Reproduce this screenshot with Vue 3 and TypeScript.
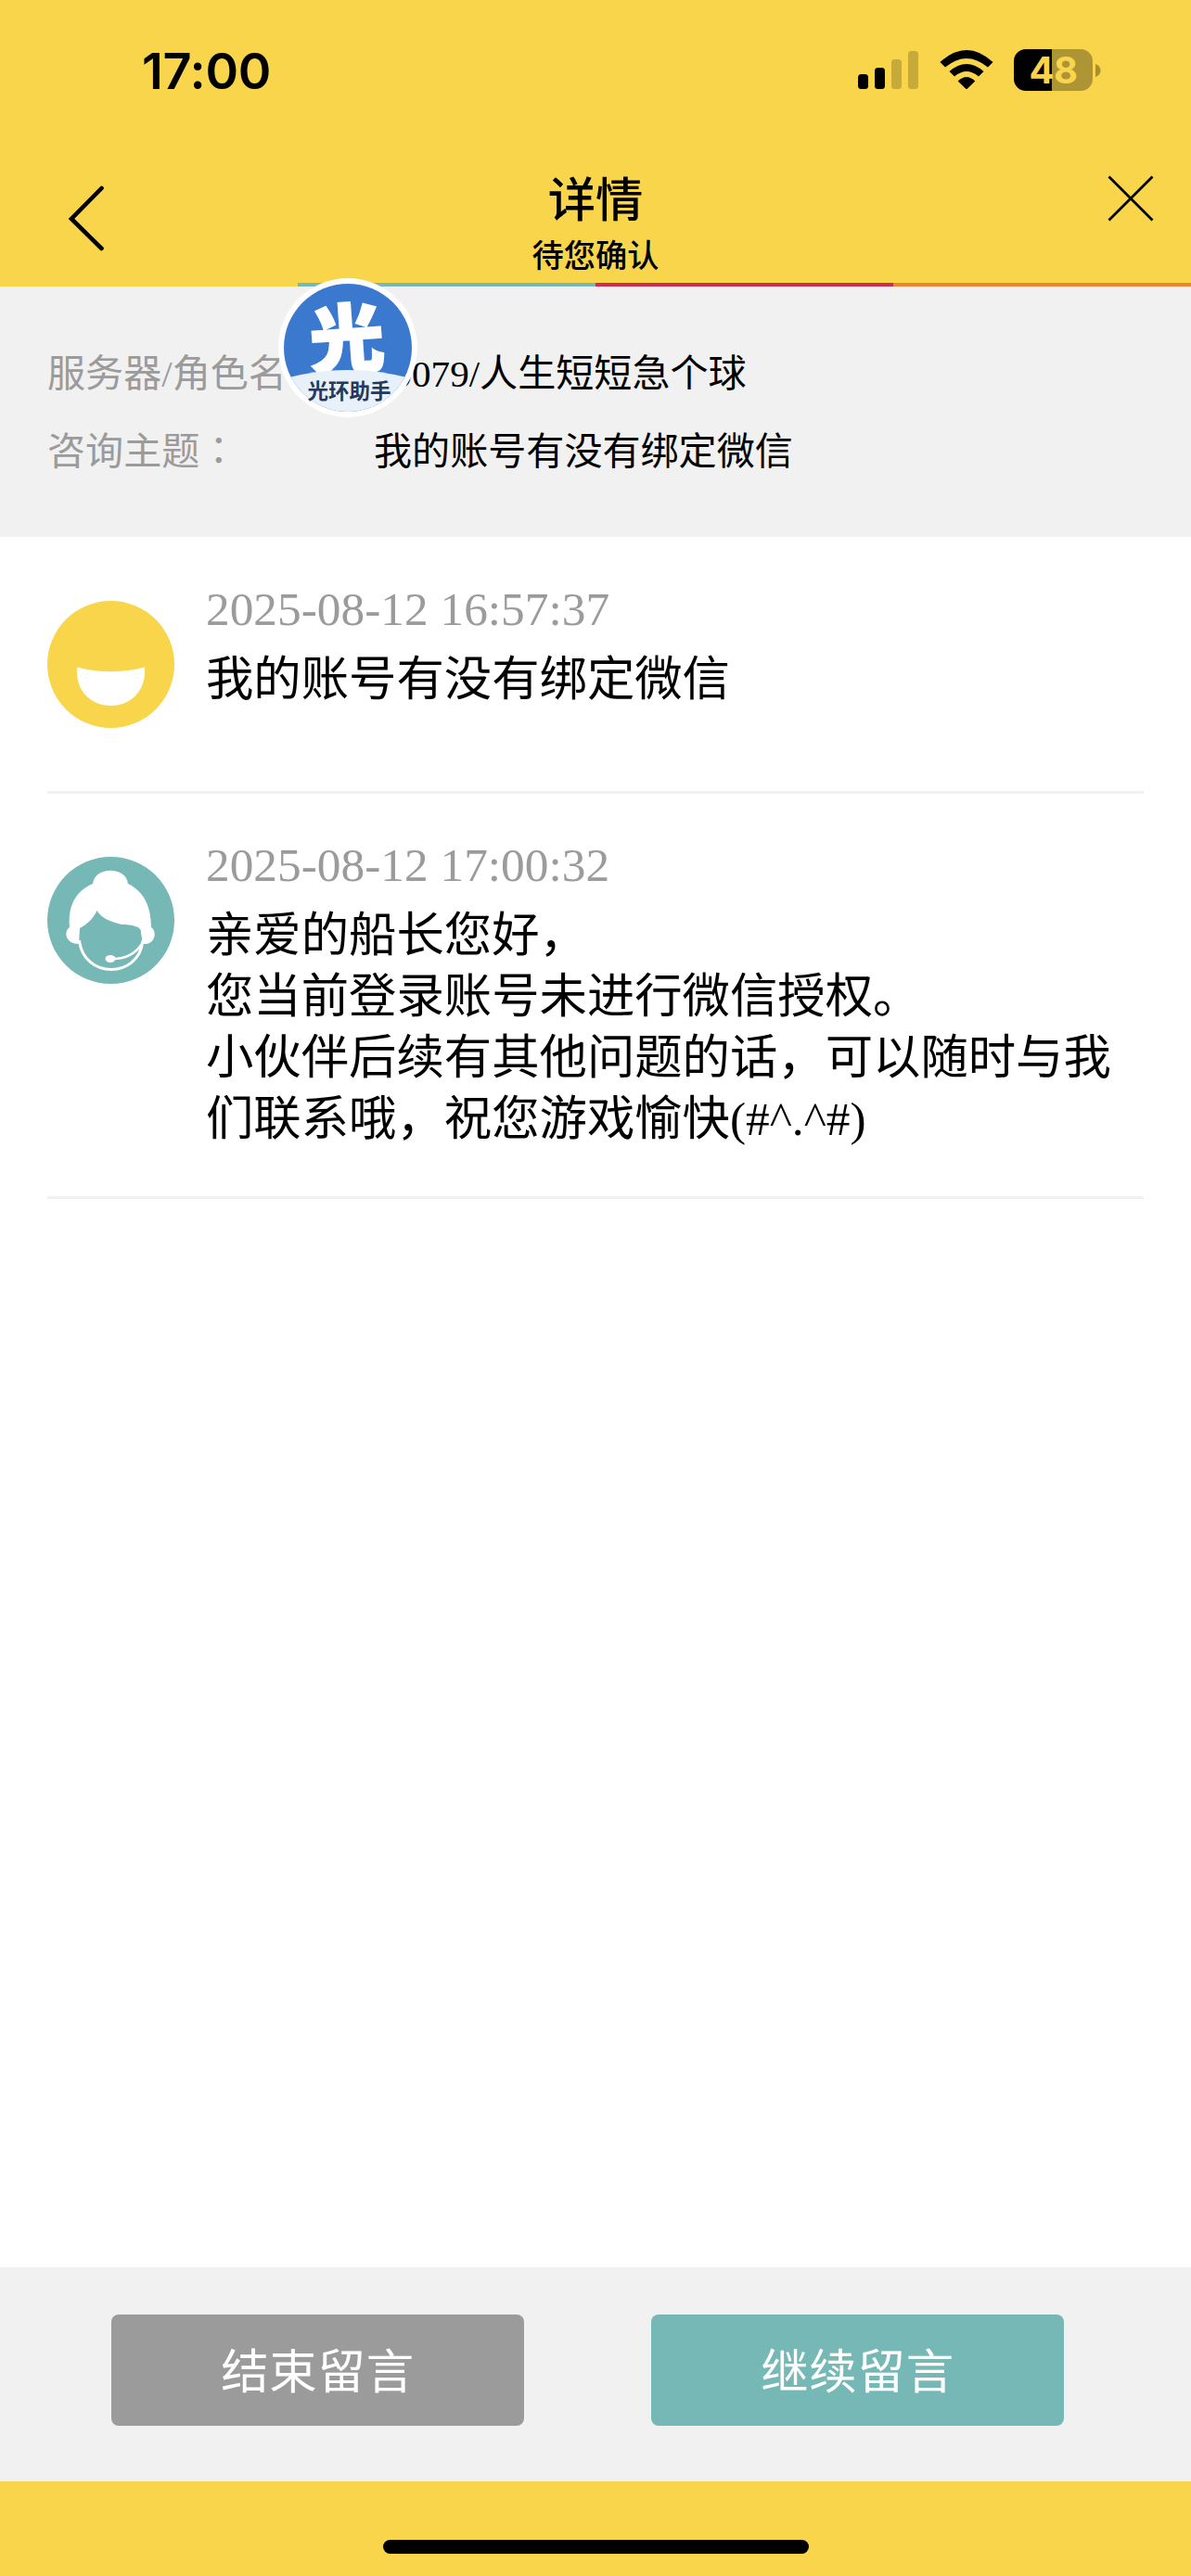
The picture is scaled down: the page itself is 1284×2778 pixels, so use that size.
<script setup lang="ts">
interface Message {
  from: 'user' | 'agent'
  time: string
  lines: string[]
}

const messages: Message[] = [
  { from: 'user', time: '2025-08-12 16:57:37', lines: ['我的账号有没有绑定微信'] },
  {
    from: 'agent',
    time: '2025-08-12 17:00:32',
    lines: [
      '亲爱的船长您好，',
      '您当前登录账号未进行微信授权。',
      '小伙伴后续有其他问题的话，可以随时与我们联系哦，祝您游戏愉快(#^.^#)',
    ],
  },
]
</script>

<template>
  <div class="screen">
    <header class="top">
      <div class="status">
        <span class="clock">17:00</span>
        <div class="indicators">
          <svg class="signal" width="65" height="41" viewBox="0 0 65 41">
            <rect x="0" y="25" width="11" height="16" rx="3.5" />
            <rect x="18" y="18" width="11" height="23" rx="3.5" />
            <rect x="36" y="9" width="11" height="32" rx="3.5" opacity=".2" />
            <rect x="54" y="0" width="11" height="41" rx="3.5" opacity=".2" />
          </svg>
          <svg class="wifi" width="58" height="42" viewBox="0 0 58 42">
            <path d="M0.5 13 Q29 -13 57.500 13 L52 18.600 Q29 -0.600 6 18.600Z" />
            <path d="M10.500 23 Q29 7 47.500 23 L42 28.600 Q29 17.500 16 28.600Z" />
            <path d="M19.700 33.600 Q29 24.500 38.300 33.600 L29 42.500Z" />
          </svg>
          <div class="battery">
            <span>48</span>
          </div>
          <svg class="nub" width="6" height="14" viewBox="0 0 6 14"><path d="M0 0Q5.500 2 5.500 7T0 14Z" opacity=".32" /></svg>
        </div>
      </div>
      <nav class="nav">
        <svg class="back" width="42" height="72" viewBox="0 0 42 72">
          <path d="M37.500 4 L5 37 L37.500 69" fill="none" stroke="#000" stroke-width="4.600" stroke-linecap="round" />
        </svg>
        <div class="titles">
          <h1>详情</h1>
          <p>待您确认</p>
        </div>
        <svg class="close" width="50" height="50" viewBox="0 0 50 50">
          <path d="M1.500 1.500 L48.500 48.500 M48.500 1.500 L1.500 48.500" stroke="#000" stroke-width="2.800" />
        </svg>
      </nav>
      <div class="stripe"><i></i><i class="teal"></i><i class="red"></i><i class="orange"></i></div>
    </header>

    <section class="info">
      <div class="row"><span class="label">服务器/角色名<b>：</b></span><span>10079/人生短短急个球</span></div>
      <div class="row"><span class="label">咨询主题<b>：</b></span><span>我的账号有没有绑定微信</span></div>
    </section>

    <main class="list">
      <article v-for="m in messages" :key="m.time" class="msg">
        <svg v-if="m.from === 'user'" class="avatar" viewBox="0 0 137 137">
          <circle cx="68.500" cy="68.500" r="68.500" fill="#f8d54b" />
          <path d="M32 71.500 Q68.500 81 105 71.500 C107 96 91 113 68.500 113 C46 113 30 96 32 71.500Z" fill="#fff" />
        </svg>
        <svg v-else class="avatar" viewBox="0 0 137 137">
          <circle cx="68.500" cy="68.500" r="68.500" fill="#75b8b5" />
          <path d="M49 29 C51 10 85 10 87 29 C104 37 112 54 112 76 C118 80 117 92 107 94 L103 94 L101 82 C102 75 91 73 80 73 C68 70 58 66 53.500 58 C50 66 43 73 35 77 L34 94 C20 94 17 81 24 76 C22 52 31 37 49 29Z" fill="#fff" />
          <path d="M34.500 90 C39 132 99 132 103 90" fill="none" stroke="#fff" stroke-width="3" />
          <path d="M102 94 Q91 110 71 110" fill="none" stroke="#fff" stroke-width="2.600" />
          <ellipse cx="68" cy="110" rx="5.500" ry="4" fill="#fff" />
        </svg>
        <div class="body">
          <time>{{ m.time }}</time>
          <p v-for="line in m.lines" :key="line">{{ line }}</p>
        </div>
      </article>
    </main>

    <footer class="actions">
      <button class="end">结束留言</button>
      <button class="go">继续留言</button>
    </footer>
    <div class="home"><i></i></div>

    <svg class="float" width="150" height="150" viewBox="0 0 150 150">
      <defs>
        <clipPath id="disc"><circle cx="75" cy="75" r="69" /></clipPath>
      </defs>
      <circle cx="75" cy="75" r="75" fill="#fff" />
      <g clip-path="url(#disc)">
        <rect width="150" height="150" fill="#3b79cf" />
        <text class="mark" x="74" y="95" text-anchor="middle" transform="rotate(-4 74 66)">光</text>
        <path d="M0 110 Q75 88 150 110 V150 H0Z" fill="#e8f0f9" />
      </g>
      <text class="brand" x="76.500" y="130" text-anchor="middle" textLength="90">光环助手</text>
    </svg>
  </div>
</template>

<style>
body {
  margin: 0;
  background: #fff;
}
</style>

<style scoped>
.screen {
  position: relative;
  display: flex;
  flex-direction: column;
  width: 1284px;
  height: 2778px;
  background: #fff;
  color: #000;
  font-family: "Liberation Serif", "Noto Sans CJK SC", serif;
}
.top {
  display: flex;
  flex-direction: column;
  height: 309px;
  background: #f8d54b;
}
.status {
  display: flex;
  justify-content: space-between;
  height: 150px;
  padding: 0 97px 0 153px;
}
.clock {
  margin-top: 45px;
  font: 600 54px/64px Inter, sans-serif;
  letter-spacing: -0.3px;
}
.indicators {
  display: flex;
  align-items: flex-start;
}
.signal {
  margin: 55px 23px 0 0;
}
.wifi {
  margin: 54px 22px 0 0;
}
.battery {
  width: 85px;
  height: 45px;
  margin-top: 53px;
  border-radius: 13px;
  background: linear-gradient(90deg, #000 41px, #ad9535 41px);
  color: #f8d54b;
  font: 700 40px/46px Inter, sans-serif;
  letter-spacing: -0.5px;
  text-align: center;
}
.nub {
  margin: 69px 0 0 3px;
}
.nav {
  display: flex;
  align-items: flex-start;
  height: 155px;
  padding: 0 40px 0 72px;
}
.back {
  flex: none;
  margin-top: 49px;
}
.titles {
  width: 300px;
  margin: 0 auto 0 378px;
  text-align: center;
  font-family: "Noto Sans CJK SC", sans-serif;
}
.titles h1 {
  margin: 25px 0 0;
  font-size: 51.36px;
  font-weight: 500;
  line-height: 74px;
}
.titles p {
  margin: 0;
  font-size: 34.24px;
  font-weight: 500;
  line-height: 49px;
}
.close {
  margin-top: 39px;
}
.stripe {
  display: flex;
  height: 4px;
}
.stripe i {
  flex: 1;
}
.teal {
  background: #75b8b5;
}
.red {
  background: #cb2e55;
}
.orange {
  background: #ee8433;
}
.info {
  box-sizing: border-box;
  height: 270px;
  padding: 52px 51px 0;
  background: #f1f1f1;
  font-size: 41.09px;
  line-height: 84px;
}
.row {
  display: flex;
  white-space: nowrap;
}
.label {
  width: 352px;
  color: #9b9b9b;
}
.label b {
  font-family: "Noto Sans CJK TC", sans-serif;
  font-weight: 400;
  line-height: 1;
}
.list {
  flex: 1;
  padding: 1px 51px 0;
}
.msg {
  box-sizing: border-box;
  display: flex;
  min-height: 276px;
  padding: 44px 0 50px;
  border-bottom: 3px solid #f1f1f1;
}
.avatar {
  flex: none;
  width: 137px;
  height: 137px;
  margin: 24px 34px 0 0;
}
.body {
  width: 1000px;
  font-size: 51.36px;
  line-height: 66px;
}
.body time {
  display: block;
  margin-bottom: 10px;
  color: #9b9b9b;
}
.body p {
  margin: 0;
}
.actions {
  box-sizing: border-box;
  display: flex;
  gap: 137px;
  height: 231px;
  padding: 51px 120px 0;
  background: #f1f1f1;
}
.actions button {
  width: 445px;
  height: 120px;
  padding: 0 0 4px;
  border: 0;
  border-radius: 8px;
  color: #fff;
  font: 400 51.36px/116px "Noto Sans CJK SC", sans-serif;
  letter-spacing: 0.8px;
}
.end {
  background: #9b9b9b;
}
.go {
  background: #75b8b5;
}
.home {
  display: flex;
  justify-content: center;
  align-items: flex-start;
  height: 102px;
  background: #f8d54b;
}
.home i {
  width: 459px;
  height: 15px;
  margin-top: 63px;
  border-radius: 8px;
  background: #000;
}
.float {
  position: absolute;
  left: 300px;
  top: 300px;
}
.mark {
  fill: #fff;
  stroke: #fff;
  stroke-width: 2.500px;
  font: 900 80px "Noto Sans CJK SC", sans-serif;
}
.brand {
  fill: #23395f;
  font: 700 22.500px "Noto Sans CJK SC", sans-serif;
}
</style>
